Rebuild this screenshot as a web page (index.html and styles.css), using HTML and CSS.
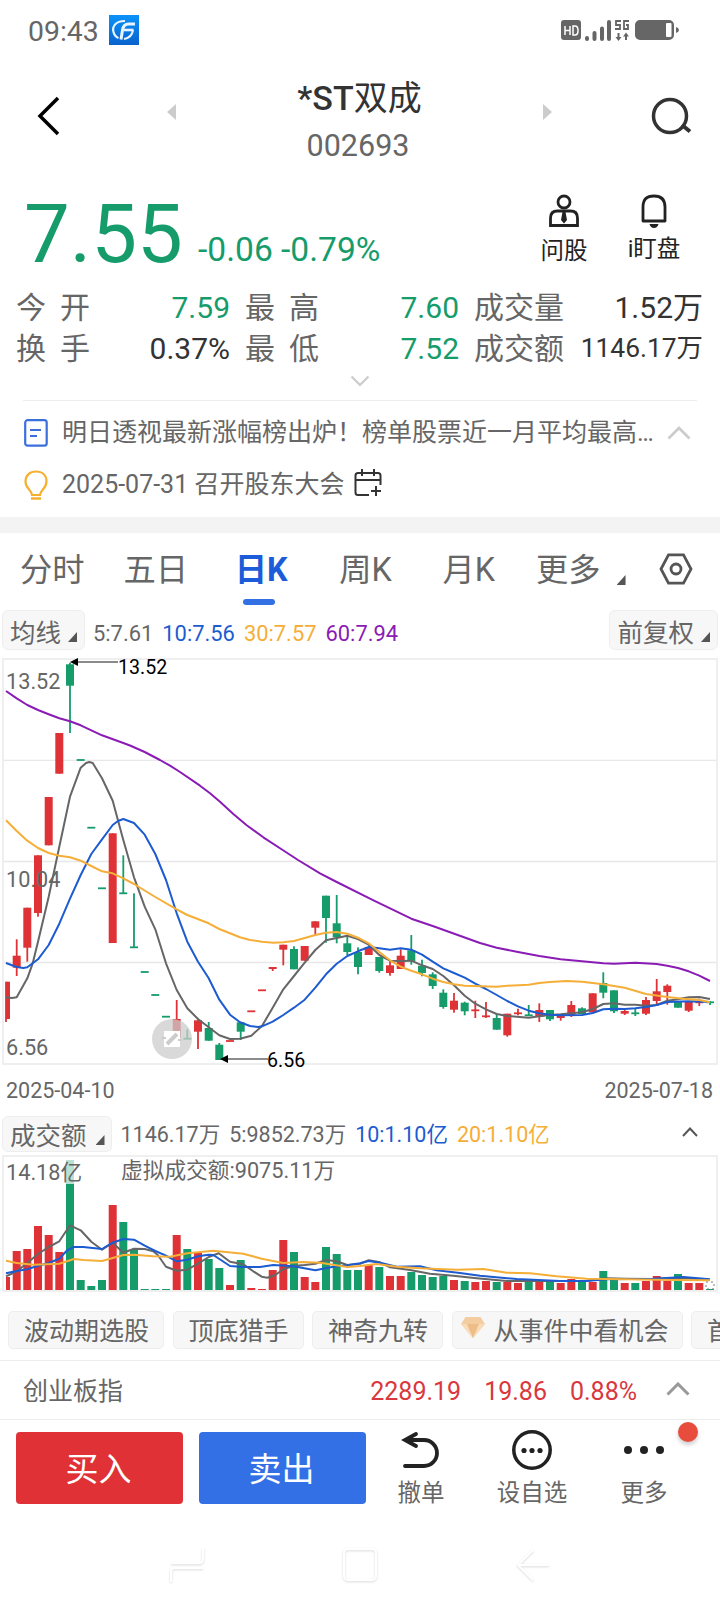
FILE: index.html
```html
<!DOCTYPE html>
<html lang="zh-CN">
<head>
    <meta charset="UTF-8">
    <meta name="viewport" content="width=device-width, initial-scale=1.0">
    <title>*ST双成 002693</title>
    <link rel="stylesheet" href="styles.css">
</head>
<body>
    <div class="status-bar">
        <span class="time">09:43</span>
        <svg class="app-logo" width="30" height="30" viewBox="0 0 30 30">
            <defs>
                <linearGradient id="logo-bg" x1="0" y1="0" x2="0" y2="1">
                    <stop offset="0" stop-color="#0a93fb"/>
                    <stop offset="1" stop-color="#0a62cc"/>
                </linearGradient>
            </defs>
            <rect width="30" height="30" fill="url(#logo-bg)"/>
            <g fill="none" stroke="#e8f4ff">
                <path d="M16 6C6 6 3 12 4.500 17c.8 3 2.500 5 5 6" stroke-width="2.200"/>
                <path d="M12 24.500l1.500-9.500q1-6 6-6H26" stroke-width="3"/>
                <path d="M15 15h9.500" stroke-width="2.600"/>
                <path d="M24 15q-1 7.500-9 9" stroke-width="2"/>
            </g>
        </svg>
        <svg class="signals" width="120" height="24" viewBox="0 0 120 24">
            <rect x="0" y="2" width="20" height="20" rx="3" fill="#666"/>
            <path d="M4 8v9M9 8v9M4 12.500h5M12 8v9h2q3 0 3-4.500t-3-4.500z" fill="none" stroke="#fff" stroke-width="1.500"/>
            <path d="M26 20v1M33.500 15v6M41 10.500v10.500M48 4v17" stroke="#666" stroke-width="4" stroke-linecap="round"/>
            <path d="M60 3h-5v4h4v4h-5M68 3h-5v8h4v-4h-2" fill="none" stroke="#666" stroke-width="1.800"/>
            <path d="M57.500 15v5M65 22v-5" stroke="#666" stroke-width="2"/>
            <path d="M54.500 19h6l-3 4zM62 18.500h6l-3-4z" fill="#666"/>
            <rect x="75" y="3" width="37" height="18" rx="4" fill="#666" stroke="#666" stroke-width="2"/>
            <rect x="105" y="5" width="5.500" height="14" rx="1" fill="#fff"/>
            <path d="M115 9q3 1 3 3t-3 3z" fill="#666"/>
        </svg>
    </div>

    <header class="title-bar">
        <svg class="back" width="24" height="40" viewBox="0 0 24 40"><path d="M22 2L4 20l18 18" fill="none" stroke="#000" stroke-width="3.500"/></svg>
        <svg class="switch" width="9" height="16" viewBox="0 0 9 16"><path d="M9 0v16L0 8z" fill="#ccc"/></svg>
        <div class="stock">
            <h1>*ST<span>双成</span></h1>
            <p>002693</p>
        </div>
        <svg class="switch" width="9" height="16" viewBox="0 0 9 16"><path d="M0 0v16l9-8z" fill="#ccc"/></svg>
        <svg class="search" width="42" height="40" viewBox="0 0 42 40"><circle cx="19" cy="19" r="16.500" fill="none" stroke="#333" stroke-width="3.500"/><path d="M31 28l8 6.500" stroke="#333" stroke-width="4"/></svg>
    </header>

    <section class="quote">
        <div class="price-row">
            <span class="price">7.55</span>
            <span class="change">-0.06 -0.79%</span>
            <div class="quick ask">
                <svg width="32" height="34" viewBox="0 0 32 34" fill="none" stroke="#222" stroke-width="2.800">
                    <circle cx="16" cy="8" r="6"/>
                    <path d="M2.500 31.500V24q0-7 7-7h13q7 0 7 7v7.500z"/>
                    <path d="M14.500 18h3l1.500 8-3 3.500-3-3.500z" fill="#222" stroke="none"/>
                </svg>
                <span>问股</span>
            </div>
            <div class="quick watch">
                <svg width="32" height="34" viewBox="0 0 32 34" fill="none" stroke="#222" stroke-width="2.800">
                    <path d="M5 27V13Q5 2 16 2t11 11v14z" stroke-linejoin="round"/>
                    <path d="M11.500 30h9q-1 4-4.500 4t-4.500-4z" fill="#222" stroke="none"/>
                </svg>
                <span>i盯盘</span>
            </div>
        </div>
        <div class="figures">
            <span class="name spread">今开</span><span class="value down">7.59</span>
            <span class="name spread">最高</span><span class="value down">7.60</span>
            <span class="name">成交量</span><span class="value">1.52万</span>
            <span class="name spread">换手</span><span class="value">0.37%</span>
            <span class="name spread">最低</span><span class="value down">7.52</span>
            <span class="name">成交额</span><span class="value small">1146.17万</span>
        </div>
        <svg class="expand" width="20" height="12" viewBox="0 0 20 12"><path d="M1.500 1.500L10 10l8.500-8.500" fill="none" stroke="#ccc" stroke-width="2.200"/></svg>
    </section>

    <section class="notices">
        <div class="notice">
            <svg width="24" height="28" viewBox="0 0 24 28" fill="none" stroke="#3b70dc" stroke-width="2.200"><rect x="1.200" y="1.200" width="21.500" height="25.500" rx="2.500"/><path d="M6 11h11M6 17h7"/></svg>
            <span class="headline">明日透视最新涨幅榜出炉！榜单股票近一月平均最高…</span>
            <svg class="fold" width="24" height="14" viewBox="0 0 24 14"><path d="M1.500 12.500L12 2l10.500 10.500" fill="none" stroke="#ccc" stroke-width="2.800"/></svg>
        </div>
        <div class="notice">
            <svg width="24" height="30" viewBox="0 0 24 30" fill="none" stroke="#f5b030" stroke-width="2.200"><path d="M8 25c0-5-6.500-6-6.500-13.500C1.500 5 6 1.500 12 1.500S22.500 5 22.500 11.500C22.500 19 16 20 16 25z"/><path d="M7 28.500h10" stroke-width="2.500"/></svg>
            <span>2025-07-31 召开股东大会</span>
            <svg class="calendar" width="28" height="28" viewBox="0 0 28 28" fill="none" stroke="#333" stroke-width="2"><path d="M15 26H4q-2.500 0-2.500-2.500v-17Q1.500 4 4 4h20q2.500 0 2.500 2.500V16M1.500 11h25M8 0v7M20 0v7M22 17v10M17 22h10"/></svg>
        </div>
    </section>

    <nav class="tabs">
        <span>分时</span>
        <span>五日</span>
        <span class="active">日K</span>
        <span>周K</span>
        <span>月K</span>
        <span class="more">更多<i class="corner"></i></span>
        <svg width="34" height="32" viewBox="0 0 34 32" fill="none" stroke="#555" stroke-width="2.800"><path d="M9.500 1.800h15L32 16l-7.500 14.200h-15L2 16z"/><circle cx="17" cy="16" r="5"/></svg>
    </nav>

    <div class="legend">
        <span class="picker">均线<i class="corner"></i></span>
        <span class="ma5">5:7.61</span>
        <span class="ma10">10:7.56</span>
        <span class="ma30">30:7.57</span>
        <span class="ma60">60:7.94</span>
        <span class="picker right">前复权<i class="corner"></i></span>
    </div>

    <svg class="chart" id="price-chart" width="720" height="412" viewBox="0 0 720 412">
        <g fill="none" stroke="#efefef" stroke-width="2">
            <rect x="3" y="1" width="714" height="405"/>
            <path d="M4 102.300h712M4 203.500h712M4 304.500h712" stroke="#e8e8e8" stroke-width="1.300"/>
        </g>
        <g id="candles"></g>
        <g class="axis">
            <text x="6" y="31">13.52</text>
            <text x="6" y="229">10.04</text>
            <text x="6" y="397">6.56</text>
        </g>
        <g id="averages"></g>
        <g class="peak">
            <path d="M76 4h42M226 401h42" stroke="#666" stroke-width="1.500"/>
            <path d="M70 4l8-4v8zM220 401l8-4v8z"/>
            <text x="118" y="16">13.52</text>
            <text x="267" y="409">6.56</text>
        </g>
        <circle cx="172" cy="381" r="20" fill="#ccc" fill-opacity="0.750"/>
        <path d="M164 373h16v16h-16z" fill="#fff"/>
        <path d="M167 386l10-10M164 381v-2M180 381v2" stroke="#ccc" stroke-width="4"/>
    </svg>

    <div class="dates">
        <span>2025-04-10</span>
        <span>2025-07-18</span>
    </div>

    <div class="legend volume-legend">
        <span class="picker">成交额<i class="corner"></i></span>
        <span class="ma5">1146.17万</span>
        <span class="ma5">5:9852.73万</span>
        <span class="ma10">10:1.10亿</span>
        <span class="ma30">20:1.10亿</span>
        <svg class="up" width="18" height="12" viewBox="0 0 18 12"><path d="M2 10l7-7.500 7 7.500" fill="none" stroke="#555" stroke-width="2"/></svg>
    </div>

    <svg class="chart" id="volume-chart" width="720" height="138" viewBox="0 0 720 138">
        <rect x="3" y="1" width="714" height="135" fill="none" stroke="#efefef" stroke-width="2"/>
        <g id="bars"></g>
        <g id="volume-averages"></g>
        <rect x="66" y="5" width="8" height="24" fill="#fff" fill-opacity="0.700"/>
        <g class="axis">
            <text x="6" y="25">14.18亿</text>
            <text x="121" y="22.500">虚拟成交额:9075.11万</text>
        </g>
    </svg>

    <div class="tools">
        <span>波动期选股</span>
        <span>顶底猎手</span>
        <span>神奇九转</span>
        <span class="gem">
            <svg width="24" height="21" viewBox="0 0 24 21"><path d="M4.500 0h15L24 7 12 21 0 7z" fill="#f3cda0"/><path d="M0 7h24L12 21z" fill="#f8dcb8"/><path d="M6 7h12l-6 14z" fill="#eebd87"/></svg>
            从事件中看机会
        </span>
        <span>首板</span>
    </div>

    <div class="index-row">
        <span class="index-name">创业板指</span>
        <span>2289.19</span>
        <span>19.86</span>
        <span>0.88%</span>
        <svg width="24" height="14" viewBox="0 0 24 14"><path d="M1.500 12.500L12 2l10.500 10.500" fill="none" stroke="#999" stroke-width="3"/></svg>
    </div>

    <footer class="actions">
        <button class="buy">买入</button>
        <button class="sell">卖出</button>
        <div class="action cancel">
            <svg width="40" height="40" viewBox="0 0 40 40" fill="none" stroke="#222" stroke-width="3.800" stroke-linecap="round"><path d="M15 4L4 10l11 6M4 10h19a13 13 0 0 1 0 26H4"/></svg>
            <span>撤单</span>
        </div>
        <div class="action favorite">
            <svg width="40" height="40" viewBox="0 0 40 40"><circle cx="20" cy="20" r="18.200" fill="none" stroke="#222" stroke-width="3.500"/><g fill="#222"><circle cx="12" cy="20.500" r="2.600"/><circle cx="20" cy="20.500" r="2.600"/><circle cx="28" cy="20.500" r="2.600"/></g></svg>
            <span>设自选</span>
        </div>
        <div class="action others">
            <svg width="40" height="40" viewBox="0 0 40 40" fill="#222"><circle cx="4" cy="20" r="4"/><circle cx="20" cy="20" r="4"/><circle cx="36" cy="20" r="4"/></svg>
            <span>更多</span>
            <i class="badge"></i>
        </div>
    </footer>

    <div class="system-nav">
        <svg width="34" height="36" viewBox="0 0 34 36"><path d="M33 1v11q0 4-4 4H1M1 35V25q0-4 4-4h28"/></svg>
        <svg width="34" height="36" viewBox="0 0 34 36"><rect x="1" y="2" width="32" height="31" rx="4"/></svg>
        <svg width="34" height="36" viewBox="0 0 34 36"><path d="M33 18H2M17 3L2 18l15 15"/></svg>
    </div>

    <script src="script.js"></script>
</body>
</html>
```

FILE: styles.css
```css
body {
    font-family: Roboto, "Noto Sans CJK SC", sans-serif;
    background-color: #fff;
    color: #666;
    width: 720px;
    height: 1612px;
    margin: 0;
    overflow: hidden;
}
svg {
    display: block;
    flex: none;
}
.chart {
    overflow: visible;
}
span {
    white-space: nowrap;
}

/* status bar */
.status-bar {
    display: flex;
    align-items: center;
    box-sizing: border-box;
    height: 60px;
    padding: 0 39px 0 28px;
}
.time {
    font-size: 28.4px;
    line-height: 32px;
    margin-top: 3px;
}
.app-logo {
    margin-left: 10px;
}
.signals {
    margin-left: auto;
}

/* title */
.title-bar {
    display: flex;
    align-items: flex-start;
    box-sizing: border-box;
    height: 120px;
    padding: 14px 28px 0 36px;
}
.back {
    margin-top: 22px;
}
.switch {
    margin-top: 30px;
    margin-left: 107px;
}
.stock {
    flex: 1;
    text-align: center;
}
.stock + .switch {
    margin: 30px 99px 0 0;
}
.search {
    margin-top: 23px;
    margin-right: -1px;
}
h1 {
    margin: 0;
    font-size: 34px;
    font-weight: 500;
    line-height: 48px;
    color: #333;
}
h1 span {
    font-weight: 400;
}
.stock p {
    margin: 4px 0 0;
    font-size: 30.5px;
    line-height: 40px;
    padding-right: 3px;
}

/* quote */
.quote {
    height: 220px;
}
.price-row {
    display: flex;
    align-items: flex-start;
    height: 107px;
    color: #169c6b;
}
.price {
    width: 161px;
    padding-left: 24px;
    font-size: 81.5px;
    line-height: 100px;
    margin-top: 4px;
}
.change {
    width: 330px;
    padding-left: 13px;
    font-size: 33.6px;
    line-height: 40px;
    margin-top: 50px;
}
.quick {
    display: flex;
    flex-direction: column;
    align-items: center;
    width: 72px;
    padding-top: 14px;
    font-size: 23.5px;
    color: #222;
}
.quick span {
    line-height: 36px;
    margin-top: 5px;
}
.watch {
    margin-left: 18px;
}
.watch span {
    margin-top: 3px;
}
.figures {
    display: grid;
    grid-template-columns: 88px 126px 103px 126px 106px 138px;
    grid-auto-rows: 41px;
    padding-left: 16px;
    font-size: 30px;
    line-height: 41px;
}
.figures .name:nth-child(6n+3),
.figures .name:nth-child(6n+5) {
    padding-left: 15px;
}
.spread {
    letter-spacing: 14px;
}
.value {
    text-align: right;
    color: #333;
}
.value.down {
    color: #169c6b;
}
.value.small {
    font-size: 26.4px;
}
.expand {
    margin: 6px auto 0;
}

/* notices */
.notices {
    box-sizing: border-box;
    height: 133px;
    border-bottom: 16px solid #f3f3f3;
    font-size: 25px;
}
.notices::before {
    content: "";
    display: block;
    height: 1px;
    margin: 0 23px;
    background-color: #eee;
}
.notice {
    display: flex;
    align-items: center;
    height: 52px;
    padding: 0 29px 0 24px;
}
.notice:first-child {
    padding-top: 6px;
}
.notice span {
    margin-left: 14px;
    line-height: 36px;
}
.headline {
    width: 592px;
}
.fold {
    margin-left: auto;
}
.calendar {
    margin-left: 10px;
    margin-top: -4px;
}

/* tabs */
.tabs {
    display: flex;
    box-sizing: border-box;
    height: 77px;
    padding: 14px 27px 0 20px;
    font-size: 32.3px;
    line-height: 47px;
}
.tabs span {
    width: 105px;
}
.tabs .active {
    color: #1c5cd8;
    font-weight: 700;
    margin-left: 8px;
    width: 106px;
}
.tabs .active::after {
    content: "";
    display: block;
    width: 32px;
    height: 6px;
    margin: 5px 0 0 8px;
    border-radius: 3px;
    background-color: #3370e4;
}
.tabs .more {
    display: flex;
    width: 125px;
    margin-left: -10px;
}
.tabs svg {
    margin-top: 6px;
    margin-left: auto;
}
.corner {
    width: 9px;
    height: 10px;
    background-color: #555;
    clip-path: polygon(100% 0, 100% 100%, 0 100%);
}
.more .corner {
    margin: 28px 0 0 16px;
}

/* chart legends */
.legend {
    display: flex;
    align-items: center;
    height: 40px;
    margin-bottom: 8px;
    padding: 0 2px;
    font-size: 21.9px;
}
.legend span {
    margin-right: 9px;
    padding-top: 6px;
}
.legend .picker {
    display: flex;
    align-items: center;
    box-sizing: border-box;
    height: 40px;
    padding: 0 7px 0 7px;
    border: 1px solid #eee;
    border-radius: 6px;
    background-color: #f7f7f7;
    font-size: 25.5px;
    margin-right: 8px;
}
.picker .corner {
    margin: 14px 0 0 7px;
}
.legend .right {
    margin-left: auto;
    margin-right: 0;
}
.ma10 {
    color: #1c5bd0;
}
.ma30 {
    color: #f5ae38;
}
.ma60 {
    color: #8a1cb5;
}
.axis {
    font-size: 21.7px;
    fill: #666;
}
.peak {
    font-size: 19.6px;
    fill: #000;
}
.dates {
    display: flex;
    justify-content: space-between;
    height: 46px;
    padding: 0 7px 0 6px;
    font-size: 21.5px;
    line-height: 42px;
}
.volume-legend {
    height: 36px;
    margin-bottom: 3px;
    font-size: 21.5px;
}
.volume-legend span {
    padding-top: 0;
    margin-top: -3px;
}
.volume-legend .picker {
    height: 36px;
    margin-top: 0;
    margin-right: 9px;
    padding-right: 6px;
    padding-bottom: 2px;
}
.volume-legend .corner {
    margin-left: 9px;
}
.up {
    margin: -4px 19px 0 auto;
}

/* strategy chips */
.tools {
    display: flex;
    gap: 8.5px;
    height: 49px;
    padding: 18px 0 0 8px;
    border-bottom: 1px solid #eee;
    overflow: hidden;
    font-size: 25px;
}
.tools span {
    display: flex;
    align-items: center;
    flex: none;
    box-sizing: border-box;
    height: 38px;
    padding: 0 14px 2px 15px;
    border: 1px solid #eee;
    border-radius: 5px;
    background-color: #f7f7f7;
}
.tools .gem {
    gap: 9px;
    padding-left: 8px;
    padding-right: 13px;
}
.gem svg {
    margin-top: -4px;
}

/* index */
.index-row {
    display: flex;
    align-items: center;
    height: 58px;
    padding: 0 30px 0 23px;
    border-bottom: 1px solid #eee;
    font-size: 25px;
    color: #d8383e;
}
.index-row span {
    margin: 2px 23px 0 0;
}
.index-row .index-name {
    color: #666;
    margin: -2px auto 0 0;
}
.index-row svg {
    margin-left: 6px;
    margin-top: -2px;
}

/* bottom actions */
.actions {
    display: flex;
    box-sizing: border-box;
    height: 110px;
    padding: 12px 0 0 16px;
}
.actions button {
    width: 167px;
    height: 72px;
    margin-right: 16px;
    padding: 0 2px 3px 0;
    border: none;
    border-radius: 4px;
    font-family: inherit;
    font-size: 33px;
    color: #fff;
}
.buy {
    background-color: #e03136;
}
.sell {
    background-color: #3370e6;
}
.action {
    position: relative;
    display: flex;
    flex-direction: column;
    align-items: center;
    width: 78px;
    font-size: 23.5px;
}
.action svg {
    margin-top: -2px;
}
.action span {
    margin-top: 5px;
    line-height: 36px;
}
.favorite {
    margin-left: 33px;
}
.others {
    margin-left: 34px;
}
.badge {
    position: absolute;
    top: -10px;
    right: -15px;
    width: 20px;
    height: 20px;
    border-radius: 50%;
    background-color: #e74c3c;
    box-shadow: 0 3px 4px rgba(0, 0, 0, 0.2);
}

/* android navigation keys */
.system-nav {
    display: flex;
    gap: 139px;
    padding: 17px 0 0 170px;
}
.system-nav svg {
    fill: none;
    stroke: #fff;
    stroke-width: 2;
    overflow: visible;
    filter: drop-shadow(0 1px 1px rgba(0, 0, 0, 0.15));
}
```

FILE: script.js
```js
const RED = '#de3237';
const GREEN = '#169c6b';
const STEP = 32 / 3;
const START = 6;

// direction, body top, body bottom, high, low
const candles = [
    ['r', 323.7, 361, 323.7, 364], ['r', 297.7, 309.7, 281.3, 318], ['r', 249.7, 289.7, 249.7, 303.7],
    ['r', 197.3, 255, 197.3, 258.7], ['r', 139, 187.3, 139, 187.3], ['r', 75, 115.7, 75, 115.7],
    ['g', 6.3, 27.7, 4.7, 75], ['g', 102, 102, 102, 102], ['g', 169.7, 169.7, 169.7, 169.7],
    ['g', 230.3, 230.3, 230.3, 230.3], ['r', 175.3, 285, 175.3, 285], ['g', 235.3, 235.3, 197.3, 235.3],
    ['g', 289.3, 289.3, 235.3, 289.3], ['g', 314, 314, 314, 314], ['g', 337, 337, 337, 337],
    ['g', 358.7, 358.7, 358.7, 358.7], ['r', 361, 379.7, 342, 379.7], ['g', 380.7, 380.7, 371.3, 380.7],
    ['r', 362.3, 373.7, 361, 391], ['g', 370, 382.7, 364, 382.7], ['g', 386.7, 402, 385, 402],
    ['r', 383, 383, 383, 383], ['g', 364.3, 373.7, 364, 382], ['r', 353.3, 353.3, 353.3, 353.3],
    ['r', 332.3, 332.3, 332.3, 332.3], ['r', 309, 311, 309, 313], ['r', 286.7, 291.7, 286.7, 307.3],
    ['g', 291, 311.3, 288.3, 311.3], ['r', 288, 302.7, 288, 302.7], ['r', 263.3, 269.7, 263.3, 276.7],
    ['g', 237.7, 260, 237.7, 284.7], ['g', 265.3, 279.3, 237, 285.3], ['g', 285.3, 294, 278.7, 297],
    ['g', 294, 309, 289.3, 316.3], ['r', 289.3, 297, 289.3, 297], ['g', 299, 313, 299, 314.7],
    ['r', 307.3, 315, 302.7, 317.7], ['r', 297.7, 311, 291.3, 311], ['g', 292.3, 303.3, 277, 306.7],
    ['g', 307.7, 315, 301.7, 318.3], ['g', 316.3, 328, 314.3, 331], ['g', 334.7, 349, 331.3, 350.7],
    ['r', 342.7, 351.7, 335, 354.7], ['g', 344.7, 353.3, 343.7, 357.3], ['r', 352.3, 352.3, 342.7, 360],
    ['r', 358.3, 358.3, 344, 360], ['g', 360, 371.7, 356.3, 371.7], ['r', 355.7, 377.3, 355.7, 378.7],
    ['r', 355.3, 355.3, 350.7, 357.3], ['g', 357.3, 357.3, 347, 357.3], ['r', 352, 359, 345.3, 364],
    ['g', 352, 361.3, 352, 363], ['r', 356.3, 360, 356.3, 362.7], ['r', 347, 357, 343, 359],
    ['g', 350.3, 356, 349.3, 356], ['r', 335.3, 354.3, 335.3, 354.3], ['g', 325, 334.7, 314.3, 340.3],
    ['g', 332.3, 353.3, 332.3, 355], ['r', 353, 355.7, 351.7, 357], ['g', 355.3, 355.3, 351, 358],
    ['r', 342, 355.7, 339, 357], ['r', 333.3, 343, 321, 346.3], ['r', 327.7, 334, 326.3, 346.7],
    ['g', 343, 349.7, 343, 349.7], ['r', 343.3, 352.7, 343.3, 354], ['r', 344.3, 344.3, 340.7, 348],
    ['g', 344.3, 344.3, 343, 347]
];

const volumes = [
    13, 39, 41, 64, 55, 38, 130, 10, 4, 10, 85, 68, 40, 1, 1, 1, 55, 41, 37, 31, 22, 5, 30, 2, 1,
    20, 50, 38, 13, 8, 43, 36, 20, 20, 25, 23, 14, 14, 18, 15, 13, 14, 10, 9, 8, 9, 8, 8, 7, 8, 8,
    8, 7, 11, 8, 8, 19, 10, 7, 7, 9, 14, 9, 16, 7, 7, 1
];

const priceLines = {
    '#666': [6, 339.3, 12, 340, 16.7, 339.3, 27.3, 320.3, 32.7, 305.3, 38, 283.7, 48.7, 238.7, 59.3, 188.7, 70, 138.7, 80.7, 109.7, 86, 105, 89.3, 104, 92.7, 105, 102, 120.3, 112.7, 142.7, 123.3, 182, 134, 219.3, 144.7, 248.7, 155.3, 271.3, 166, 305.3, 176.7, 332, 187.3, 350.3, 198, 361, 208.7, 369.3, 219.3, 377.3, 230, 381, 240, 380.7, 251.3, 377.7, 262, 368, 272.7, 349.7, 283.3, 331.3, 294, 318, 304.7, 304.7, 315.3, 292, 326, 282.3, 336.7, 280, 347.3, 277.7, 358, 281, 368.7, 286.7, 379.3, 297, 390, 302.7, 400.7, 303, 411.3, 302.7, 422, 307.3, 432.7, 311, 443.3, 318, 454, 327.3, 464.7, 337.7, 475.3, 345.7, 486, 351.3, 496.7, 356, 507.3, 358, 528.7, 359.7, 539.3, 358.3, 550, 357, 560.7, 356.3, 582, 354.3, 592.7, 351, 603.3, 346, 614, 345.3, 624.7, 346.7, 635.3, 346.7, 646, 347.7, 656.7, 347, 667.3, 342.7, 678, 341.3, 688.7, 339.3, 699.3, 339, 710, 341],
    '#1c5bd0': [6, 305, 16.7, 309, 23.3, 310, 27.3, 309.3, 38, 301.3, 48.7, 287, 59.3, 265.7, 70, 240.7, 80.7, 217, 91.3, 196, 102, 181.3, 112.7, 167, 118, 163, 123.3, 161, 134, 165, 144.7, 176.7, 155.3, 196, 166, 222, 176.7, 255.3, 187.3, 283.7, 198, 303.7, 208.7, 320.3, 219.3, 341.7, 230, 356.7, 240, 364.3, 250, 368, 258, 369, 262, 368.3, 272.7, 363.7, 283.3, 357, 294, 349.7, 304.7, 341.7, 315.3, 329.7, 326, 316.3, 336.7, 305.7, 347.3, 298, 358, 293.3, 368.7, 289, 379.3, 290.3, 390, 291.7, 400.7, 290.3, 411.3, 291.7, 422, 296.7, 432.7, 303.7, 443.3, 310.3, 454, 315, 464.7, 319.7, 475.3, 325.7, 486, 331, 496.7, 337, 507.3, 343, 518, 348.3, 528.7, 352.7, 539.3, 355.3, 550, 356.7, 560.7, 357.3, 582, 357, 592.7, 355, 603.3, 351.3, 614, 350.7, 624.7, 351, 635.3, 350.3, 646, 349, 656.7, 347, 667.3, 344, 688.7, 343.3, 710, 344],
    '#f5ae38': [6, 162.3, 16.7, 173, 27.3, 182.7, 38, 190, 48.7, 195, 59.3, 197.7, 70, 199.3, 80.7, 202.7, 91.3, 208, 102, 213.3, 112.7, 215.3, 123.3, 220.3, 134, 226, 155.3, 239, 176.7, 251.3, 187.3, 257, 208.7, 265.3, 219.3, 271, 240, 279.3, 250, 282, 262, 283.7, 273.3, 284.7, 283.3, 284.3, 294, 283, 304.7, 280, 315.3, 277, 326, 274.7, 336.7, 274, 347.3, 275.7, 358, 279.7, 368.7, 285.3, 379.3, 294, 390, 302.3, 400.7, 308.7, 411.3, 312.7, 422, 316.3, 432.7, 320.7, 443.3, 324, 454, 326.3, 464.7, 327.7, 480, 328.3, 496.7, 328.7, 507.3, 327.7, 528.7, 326.7, 539.3, 325, 550, 324, 566.7, 323, 582, 323.7, 603.3, 326.3, 624.7, 329.7, 646, 336, 667.3, 339, 683.3, 340.7, 699.3, 342, 710, 344.3],
    '#8a1cb5': [6, 33, 16.7, 40.3, 27.3, 47, 38, 52, 48.7, 56.3, 59.3, 60.3, 70, 63.3, 80.7, 67.3, 102, 77.3, 123.3, 85, 130, 87.5, 144.7, 94, 160, 102, 170, 107.7, 180, 114, 200, 127.7, 210, 135.3, 220, 143.7, 233.3, 156, 246.7, 167.3, 263.3, 179.3, 282.7, 192, 298, 202, 320, 215.3, 336.7, 224, 374, 242.7, 411.3, 260.7, 432.7, 268, 480, 285, 496.7, 289.7, 518, 294, 539.3, 298, 560.7, 301.3, 582, 303.3, 603.3, 305.3, 614, 305.7, 635.3, 304.7, 656.7, 306, 667.3, 307.7, 678, 310, 688.7, 313.3, 699.3, 317.7, 710, 323]
};

const volumeLines = {
    '#666': [6, 121.3, 16.7, 116.3, 27.3, 108, 38, 99, 48.7, 92, 59.3, 86.3, 70, 70.3, 80.7, 75.3, 91.3, 86.7, 102, 94.7, 112.7, 87.7, 123.3, 97.7, 134, 93.7, 144.7, 94, 153.3, 96.3, 158, 100.3, 166, 111.7, 176.7, 115.7, 187.3, 114.7, 198, 108.7, 208.7, 102, 218.7, 98.3, 230, 106.7, 243.3, 109.3, 253.3, 116.3, 261.7, 121.7, 267.3, 122.7, 275.3, 120, 283.3, 114.3, 293.3, 111, 304.7, 110, 315.3, 108.7, 326, 105, 336.7, 106.3, 347.3, 110, 360, 108.7, 368.7, 105.3, 380, 107.3, 390, 112.3, 410, 115, 430, 118.7, 453.3, 120.7, 476.7, 123.3, 506.7, 126, 546.7, 126, 586.7, 125.7, 606.7, 123.3, 626.7, 123.7, 653.3, 124, 680, 122.7, 710, 125],
    '#1c5bd0': [6, 118.3, 16.7, 116, 27.3, 114.3, 38, 110.7, 48.7, 108, 59.3, 103.7, 66.7, 95.7, 74, 92, 83.3, 92, 102, 94, 112.7, 87.7, 123.3, 84, 134, 84.7, 144.7, 90.7, 155.3, 96, 166, 100.7, 176.7, 106.3, 187.3, 104.7, 198, 101.3, 208.7, 99.7, 213.3, 100, 230, 111, 243.3, 112, 260, 112, 273.3, 110, 293.3, 111.3, 315.3, 115.3, 333.3, 111.7, 347.3, 110.3, 360, 108.3, 368.7, 106, 380, 107.7, 396.7, 111.7, 420, 111.3, 436.7, 115.3, 460, 118, 480, 120.7, 516.7, 124, 560, 126, 586.7, 126, 606.7, 124.3, 653.3, 123.7, 683.3, 122, 710, 124.3],
    '#f5ae38': [6, 105.7, 16.7, 108, 33.3, 109.7, 59.3, 108.7, 74, 104, 83.3, 105, 102, 106, 112.7, 103, 123.3, 100, 134, 99.7, 153.3, 101.3, 170, 101.7, 187.3, 98.3, 213.3, 95.7, 243.3, 98.7, 261.7, 103.7, 283.3, 108, 303.3, 107, 320, 107.7, 347.3, 112, 360, 111, 376.7, 109, 396.7, 111.7, 420, 113.3, 456.7, 114.7, 483.3, 114, 506.7, 117.7, 530, 118.3, 556.7, 121.3, 586.7, 123.7, 626.7, 124.3, 673.3, 125, 710, 125.3]
};

function rect(x, y, width, height, color) {
    return `<rect x="${x.toFixed(1)}" y="${y}" width="${width.toFixed(1)}" height="${height}" fill="${color}"/>`;
}

function drawCandles() {
    let out = '';
    candles.forEach(([dir, top, bottom, high, low], i) => {
        const x = START + i * STEP;
        const color = dir === 'r' ? RED : GREEN;
        const left = i === 0 ? x : x - 4;
        const flat = top === bottom;
        out += rect(x - 0.9, high, 1.8, low - high, color);
        out += rect(left, flat ? top - 0.9 : top, x + 4 - left, flat ? 1.8 : bottom - top, color);
    });
    document.getElementById('candles').innerHTML = out;
}

function drawVolumes() {
    let out = '';
    volumes.forEach((v, i) => {
        const x = START + i * STEP;
        const left = i === 0 ? x : x - 4;
        out += rect(left, 135 - v, x + 4 - left, v, candles[i][0] === 'r' ? RED : GREEN);
    });
    // the current day is still open, so it gets a dashed outline
    out += '<rect x="706" y="127" width="8" height="7" fill="none" stroke="#777" stroke-dasharray="2 3"/>';
    document.getElementById('bars').innerHTML = out;
}

function drawLines(id, lines) {
    let out = '';
    for (const color in lines) {
        const p = lines[color];
        const points = [];
        for (let i = 0; i < p.length; i += 2) {
            points.push(p[i] + ',' + p[i + 1]);
        }
        out += `<polyline points="${points.join(' ')}" fill="none" stroke="${color}" stroke-width="2" stroke-linejoin="round"/>`;
    }
    document.getElementById(id).innerHTML = out;
}

drawCandles();
drawVolumes();
drawLines('averages', priceLines);
drawLines('volume-averages', volumeLines);
```
